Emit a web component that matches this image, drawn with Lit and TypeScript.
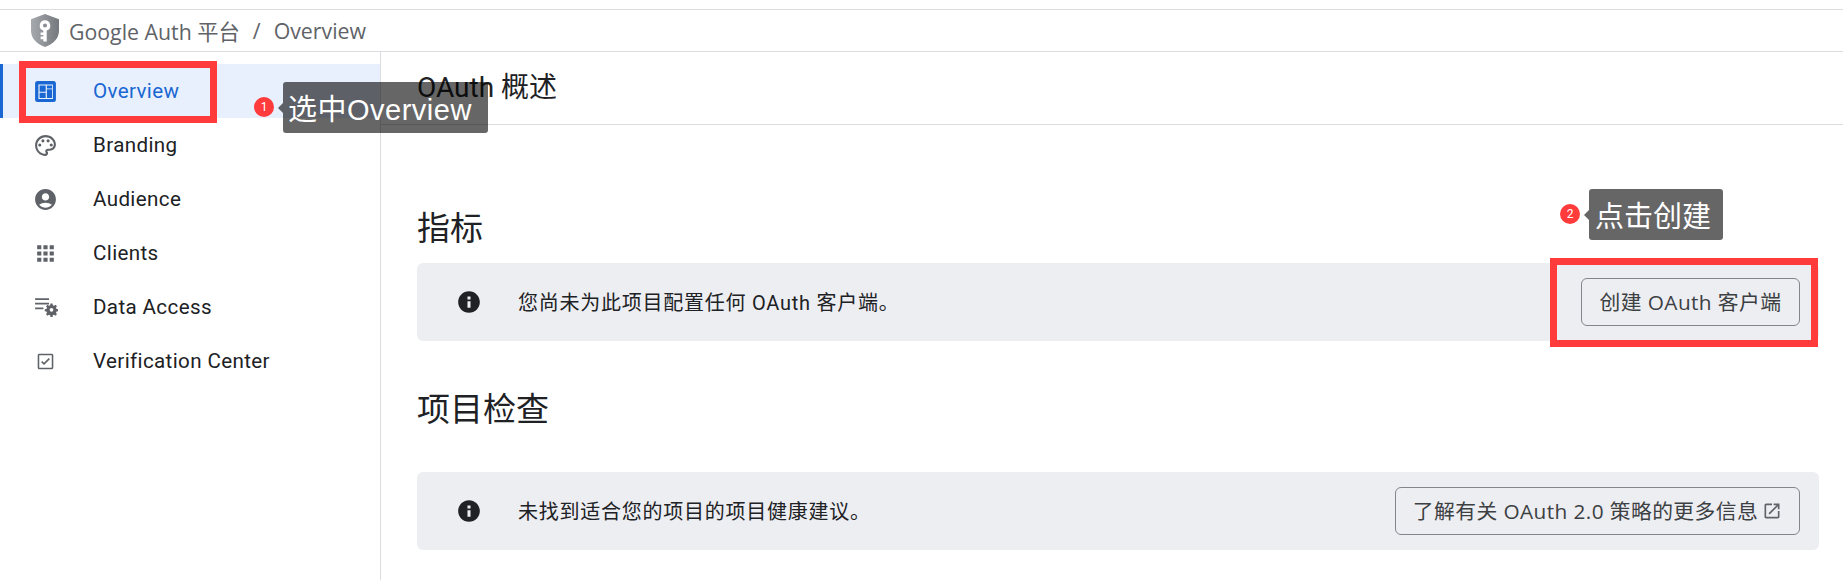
import { LitElement, html, css, svg } from "lit";
import { customElement } from "lit/decorators.js";

const icons: Record<string, unknown> = {
  overview: svg`<rect x="2" y="2" width="20" height="20" rx="2.4" fill="#1967d2"/><path fill="#fff" opacity=".92" fill-rule="evenodd" d="M5.2 5.2h13.9v13.9H5.2zM6.3 6.3v5.9h5.9V6.3zM13.3 6.3v2.7h5v-2.7zM6.3 13.3v4.9h5.9v-4.9zM13.3 9.9v8.3h5V9.9z"/>`,
  branding: svg`<path d="M12 22C6.49 22 2 17.51 2 12S6.49 2 12 2s10 4.04 10 9c0 3.31-2.69 6-6 6h-1.77c-.28 0-.5.22-.5.5 0 .12.05.23.13.33.41.47.64 1.06.64 1.67 0 1.38-1.12 2.5-2.5 2.5zm0-18c-4.41 0-8 3.59-8 8s3.59 8 8 8c.28 0 .5-.22.5-.5 0-.16-.08-.28-.14-.35-.41-.46-.63-1.05-.63-1.65 0-1.38 1.12-2.5 2.5-2.5H16c2.21 0 4-1.79 4-4 0-3.86-3.59-7-8-7z"/><circle cx="6.5" cy="11.5" r="1.5"/><circle cx="9.5" cy="7.5" r="1.5"/><circle cx="14.5" cy="7.5" r="1.5"/><circle cx="17.5" cy="11.5" r="1.5"/>`,
  audience: svg`<path d="M12 2C6.48 2 2 6.48 2 12s4.48 10 10 10 10-4.48 10-10S17.52 2 12 2zm0 4c1.93 0 3.5 1.57 3.5 3.5S13.93 13 12 13s-3.5-1.57-3.5-3.5S10.07 6 12 6zm0 14c-2.03 0-4.43-.82-6.14-2.88C7.55 15.8 9.68 15 12 15s4.45.8 6.14 2.12C16.43 19.18 14.03 20 12 20z"/>`,
  clients: svg`<path d="M4 4h4v4H4zM10 4h4v4h-4zM16 4h4v4h-4zM4 10h4v4H4zM10 10h4v4h-4zM16 10h4v4h-4zM4 16h4v4H4zM10 16h4v4h-4zM16 16h4v4h-4z"/>`,
  data: svg`<path d="M2 3h13.4v1.7H2zM2 7.4h13.4v1.7H2zM2 12h8v1.7H2z"/><path fill-rule="evenodd" d="M16.4 9.5h2.2l.35 1.8 1.35.6 1.5-1 1.5 1.5-1 1.5.6 1.35 1.8.35v2.2l-1.8.35-.6 1.35 1 1.5-1.5 1.5-1.5-1-1.35.6-.35 1.8h-2.2l-.35-1.8-1.35-.6-1.5 1-1.5-1.5 1-1.5-.6-1.35-1.8-.35v-2.2l1.8-.35.6-1.35-1-1.5 1.5-1.5 1.5 1 1.35-.6zM17.5 14.2a2 2 0 1 0 0 4 2 2 0 0 0 0-4z" transform="translate(2 -.4) scale(.9)"/>`,
  verify: svg`<path d="M18 4.5H6c-.83 0-1.5.67-1.5 1.5v12c0 .83.67 1.5 1.5 1.5h12c.83 0 1.5-.67 1.5-1.5V6c0-.83-.67-1.5-1.5-1.5zm0 13.5H6V6h12v12z"/><path d="M10.6 15.4 7.8 12.6l1.1-1.1 1.7 1.7 4.5-4.5 1.1 1.1z"/>`,
};

const nav = [
  ["overview", "Overview"],
  ["branding", "Branding"],
  ["audience", "Audience"],
  ["clients", "Clients"],
  ["data", "Data Access"],
  ["verify", "Verification Center"],
];

const info = svg`<path d="M12 2C6.48 2 2 6.48 2 12s4.48 10 10 10 10-4.48 10-10S17.52 2 12 2zm1.4 15.2h-2.8v-6h2.8v6zm0-7.6h-2.8V6.9h2.8v2.7z"/>`;

@customElement("app-root")
export class AppRoot extends LitElement {
  static styles = css`
    :host {
      display: block;
      position: relative;
      width: 1843px;
      height: 580px;
      overflow: hidden;
      background: #fff;
      color: #202124;
      font-family: Roboto, "Noto Sans CJK SC", sans-serif;
    }
    .topbar {
      margin-top: 9px;
      height: 41px;
      border-top: 1px solid #dadce0;
      border-bottom: 1px solid #dadce0;
      display: flex;
      align-items: center;
      padding-left: 31px;
      font-family: "Open Sans", "Noto Sans CJK SC", sans-serif;
      font-size: 21.3px;
      color: #5f6368;
    }
    .shield { width: 28px; height: 33px; margin-right: 10px; flex: none; }
    .sep { margin: 0 13px; }
    .body { display: flex; height: 528px; }
    .side {
      width: 380px;
      flex: none;
      border-right: 1px solid #dadce0;
      padding-top: 12px;
    }
    .item {
      height: 54px;
      display: flex;
      align-items: center;
      padding-left: 33px;
      font-size: 20.6px;
      letter-spacing: 0.36px;
      font-weight: 400;
    }
    .item svg { width: 25px; height: 25px; fill: #5f6368; margin-right: 35px; flex: none; }
    .item.active {
      background: #e8f0fe;
      color: #1967d2;
      box-shadow: inset 3px 0 0 #1967d2;
    }
    .main { flex: 1; min-width: 0; }
    .title {
      height: 66px;
      padding-bottom: 6px;
      border-bottom: 1px solid #dadce0;
      display: flex;
      align-items: center;
      padding-left: 36px;
      font-size: 28px;
    }
    .content { padding: 0 24px 0 36px; }
    h2 {
      margin: 0;
      font-size: 33px;
      font-weight: 400;
      line-height: 44px;
    }
    .h-metrics { padding-top: 82px; margin-bottom: 12px; }
    .h-check { padding-top: 47px; margin-bottom: 40px; }
    .alert {
      height: 78px;
      background: #edeef2;
      border-radius: 6px;
      display: flex;
      align-items: center;
      padding: 0 19px 0 39px;
      font-size: 20px;
      letter-spacing: 0.75px;
    }
    .alert > svg { width: 26px; height: 26px; fill: #202124; margin-right: 36px; flex: none; }
    .alert span { flex: 1; padding-bottom: 2px; }
    .btn {
      height: 48px;
      box-sizing: border-box;
      border: 1px solid #80868b;
      border-radius: 6px;
      padding-bottom: 3px;
      display: flex;
      align-items: center;
      justify-content: center;
      font-family: "Open Sans", "Noto Sans CJK SC", sans-serif;
      font-size: 20.8px;
      color: #3c4043;
      letter-spacing: 0.4px;
      white-space: nowrap;
    }
    .btn.create { width: 219px; }
    .btn.learn { width: 405px; gap: 4px; }
    .btn svg { width: 20px; height: 20px; fill: #5f6368; flex: none; margin-top: 3px; }
    .mark { position: absolute; border: 7px solid #ff3b3b; box-sizing: border-box; }
    .m1 { left: 19px; top: 61px; width: 198px; height: 62px; }
    .m2 { left: 1550px; top: 258px; width: 268px; height: 89px; }
    .badge {
      position: absolute;
      width: 20px;
      height: 20px;
      border-radius: 50%;
      background: #ff3b3b;
      color: #fff;
      font-size: 12px;
      display: flex;
      align-items: center;
      justify-content: center;
    }
    .b1 { left: 254px; top: 97px; }
    .b2 { left: 1560px; top: 204px; }
    .tip {
      position: absolute;
      height: 51px;
      box-sizing: border-box;
      padding: 0 5px 2px;
      background: rgba(0, 0, 0, 0.6);
      border-radius: 3px;
      color: #fff;
      font-family: "Liberation Sans", "Noto Sans CJK SC", sans-serif;
      font-size: 29px;
      display: flex;
      align-items: center;
      white-space: nowrap;
    }
    .tip::before {
      content: "";
      position: absolute;
      left: -5px;
      top: 21px;
      width: 0;
      height: 0;
      border-top: 5px solid transparent;
      border-bottom: 5px solid transparent;
      border-right: 5px solid rgba(0, 0, 0, 0.6);
    }
    .t1 { left: 283px; top: 82px; width: 205px; letter-spacing: 0.5px; }
    .t2 { left: 1589px; top: 189px; width: 134px; padding-left: 6px; }
  `;

  render() {
    return html`
      <div class="topbar">
        <svg class="shield" viewBox="0 0 28 33">
          <defs>
            <linearGradient id="sg" x1="0" x2="1" y1="0" y2="0">
              <stop offset="0" stop-color="#a6aaae" />
              <stop offset="1" stop-color="#75797e" />
            </linearGradient>
          </defs>
          <path fill="url(#sg)" d="M14 0 28 5.2v11.3c0 7.8-5.6 13.7-14 16.5C5.6 30.2 0 24.3 0 16.5V5.2z" />
          <path
            fill="#fff"
            fill-rule="evenodd"
            d="M14 6.2a5.3 5.3 0 0 1 1.7 10.3V27.4h-3.4v-2.2H9.6v-2.6h2.7v-1.6H9.6v-2.6h2.7v-1.9A5.3 5.3 0 0 1 14 6.2zm0 3.2a2.1 2.1 0 1 0 0 4.2 2.1 2.1 0 0 0 0-4.2z"
          />
        </svg>
        <span>Google Auth 平台</span><span class="sep">/</span><span>Overview</span>
      </div>
      <div class="body">
        <nav class="side">
          ${nav.map(
            ([k, label], i) => html`<div class="item ${i === 0 ? "active" : ""}">
              <svg viewBox="0 0 24 24">${icons[k]}</svg><span>${label}</span>
            </div>`
          )}
        </nav>
        <main class="main">
          <div class="title">OAuth 概述</div>
          <div class="content">
            <h2 class="h-metrics">指标</h2>
            <div class="alert">
              <svg viewBox="0 0 24 24">${info}</svg>
              <span>您尚未为此项目配置任何 OAuth 客户端。</span>
              <div class="btn create">创建 OAuth 客户端</div>
            </div>
            <h2 class="h-check">项目检查</h2>
            <div class="alert">
              <svg viewBox="0 0 24 24">${info}</svg>
              <span>未找到适合您的项目的项目健康建议。</span>
              <div class="btn learn">
                了解有关 OAuth 2.0 策略的更多信息
                <svg viewBox="0 0 24 24"><path d="M19 19H5V5h7V3H5c-1.11 0-2 .9-2 2v14c0 1.1.89 2 2 2h14c1.1 0 2-.9 2-2v-7h-2v7zM14 3v2h3.59l-9.83 9.83 1.41 1.41L19 6.41V10h2V3h-7z" /></svg>
              </div>
            </div>
          </div>
        </main>
      </div>
      <div class="mark m1"></div>
      <div class="mark m2"></div>
      <div class="badge b1">1</div>
      <div class="tip t1">选中Overview</div>
      <div class="badge b2">2</div>
      <div class="tip t2">点击创建</div>
    `;
  }
}
